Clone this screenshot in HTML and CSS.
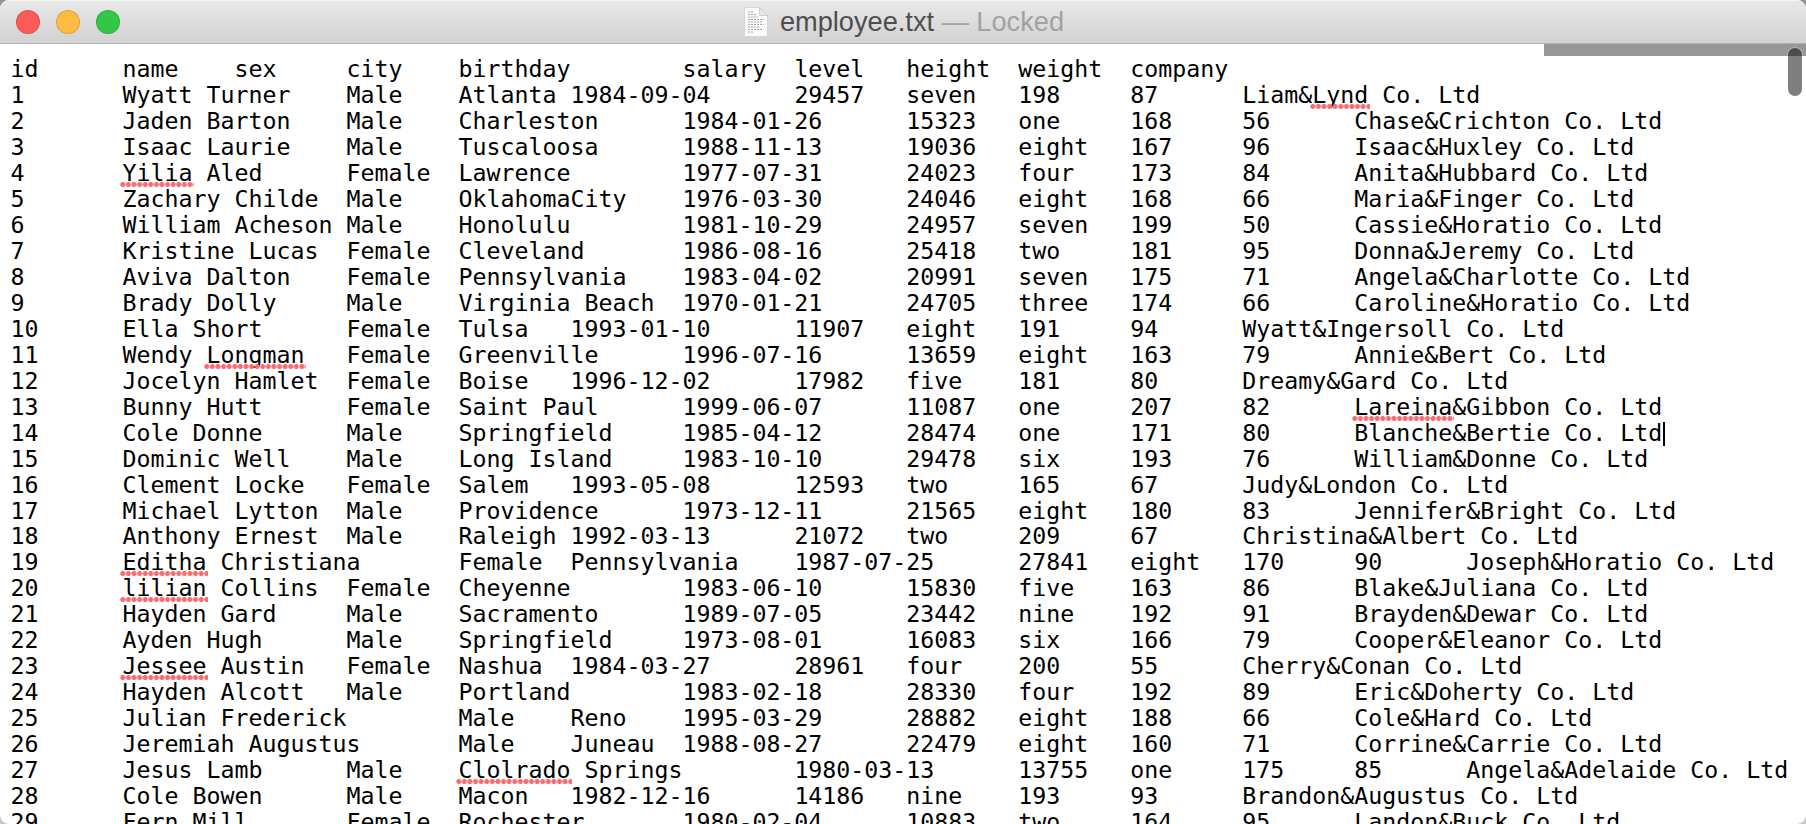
FILE: index.html
```html
<!DOCTYPE html>
<html lang="en">
<head>
<meta charset="utf-8">
<title>employee.txt</title>
<link rel="stylesheet" href="styles.css">
</head>
<body>
<div class="window">
<header class="titlebar">
<div class="lights"><span class="light red"></span><span class="light yellow"></span><span class="light green"></span></div>
<div class="title">
<svg class="docicon" width="24" height="30" viewBox="0 0 24 30"><path d="M0.5 0.5H15.5L23.5 8.5V29.5H0.5Z" fill="#fbfbfb" stroke="#d6d6d6" stroke-width="1"/><path d="M15.5 0.5V8.5H23.5Z" fill="#e6e6e6" stroke="#cfcfcf" stroke-width="1"/><path d="M4 5H9M4 7.5H13M4 10H14M4 12.5H20M4 15H19M4 17.5H20M4 20H16M4 22.5H19M4 25H9" stroke="#a8a8a8" stroke-width="1" stroke-dasharray="2 1"/></svg>
<span class="name">employee.txt</span><span class="locked"> — Locked</span>
</div>
</header>
<main class="content">
<pre class="text">id	name	sex	city	birthday	salary	level	height	weight	company
1	Wyatt Turner	Male	Atlanta	1984-09-04	29457	seven	198	87	Liam&amp;<span class="spell">Lynd</span> Co. Ltd
2	Jaden Barton	Male	Charleston	1984-01-26	15323	one	168	56	Chase&amp;Crichton Co. Ltd
3	Isaac Laurie	Male	Tuscaloosa	1988-11-13	19036	eight	167	96	Isaac&amp;Huxley Co. Ltd
4	<span class="spell">Yilia</span> Aled	Female	Lawrence	1977-07-31	24023	four	173	84	Anita&amp;Hubbard Co. Ltd
5	Zachary Childe	Male	OklahomaCity	1976-03-30	24046	eight	168	66	Maria&amp;Finger Co. Ltd
6	William Acheson	Male	Honolulu	1981-10-29	24957	seven	199	50	Cassie&amp;Horatio Co. Ltd
7	Kristine Lucas	Female	Cleveland	1986-08-16	25418	two	181	95	Donna&amp;Jeremy Co. Ltd
8	Aviva Dalton	Female	Pennsylvania	1983-04-02	20991	seven	175	71	Angela&amp;Charlotte Co. Ltd
9	Brady Dolly	Male	Virginia Beach	1970-01-21	24705	three	174	66	Caroline&amp;Horatio Co. Ltd
10	Ella Short	Female	Tulsa	1993-01-10	11907	eight	191	94	Wyatt&amp;Ingersoll Co. Ltd
11	Wendy <span class="spell">Longman</span>	Female	Greenville	1996-07-16	13659	eight	163	79	Annie&amp;Bert Co. Ltd
12	Jocelyn Hamlet	Female	Boise	1996-12-02	17982	five	181	80	Dreamy&amp;Gard Co. Ltd
13	Bunny Hutt	Female	Saint Paul	1999-06-07	11087	one	207	82	<span class="spell">Lareina</span>&amp;Gibbon Co. Ltd
14	Cole Donne	Male	Springfield	1985-04-12	28474	one	171	80	Blanche&amp;Bertie Co. Ltd<span class="caret"></span>
15	Dominic Well	Male	Long Island	1983-10-10	29478	six	193	76	William&amp;Donne Co. Ltd
16	Clement Locke	Female	Salem	1993-05-08	12593	two	165	67	Judy&amp;London Co. Ltd
17	Michael Lytton	Male	Providence	1973-12-11	21565	eight	180	83	Jennifer&amp;Bright Co. Ltd
18	Anthony Ernest	Male	Raleigh	1992-03-13	21072	two	209	67	Christina&amp;Albert Co. Ltd
19	<span class="spell">Editha</span> Christiana	Female	Pennsylvania	1987-07-25	27841	eight	170	90	Joseph&amp;Horatio Co. Ltd
20	<span class="spell">lilian</span> Collins	Female	Cheyenne	1983-06-10	15830	five	163	86	Blake&amp;Juliana Co. Ltd
21	Hayden Gard	Male	Sacramento	1989-07-05	23442	nine	192	91	Brayden&amp;Dewar Co. Ltd
22	Ayden Hugh	Male	Springfield	1973-08-01	16083	six	166	79	Cooper&amp;Eleanor Co. Ltd
23	<span class="spell">Jessee</span> Austin	Female	Nashua	1984-03-27	28961	four	200	55	Cherry&amp;Conan Co. Ltd
24	Hayden Alcott	Male	Portland	1983-02-18	28330	four	192	89	Eric&amp;Doherty Co. Ltd
25	Julian Frederick	Male	Reno	1995-03-29	28882	eight	188	66	Cole&amp;Hard Co. Ltd
26	Jeremiah Augustus	Male	Juneau	1988-08-27	22479	eight	160	71	Corrine&amp;Carrie Co. Ltd
27	Jesus Lamb	Male	<span class="spell">Clolrado</span> Springs	1980-03-13	13755	one	175	85	Angela&amp;Adelaide Co. Ltd
28	Cole Bowen	Male	Macon	1982-12-16	14186	nine	193	93	Brandon&amp;Augustus Co. Ltd
29	Fern Mill	Female	Rochester	1980-02-04	10883	two	164	95	Landon&amp;Buck Co. Ltd</pre>
<div class="hbar"></div>
<div class="vthumb"></div>
</main>
</div>
</body>
</html>
```
FILE: styles.css
```css
* { box-sizing: border-box; }
html, body { margin: 0; height: 100%; overflow: hidden; }
body { background: linear-gradient(#8d95a3, #c6c6c6 30%, #c6c6c6); }
.window {
  height: 824px;
  display: flex;
  flex-direction: column;
  border-radius: 9px;
  overflow: hidden;
  background: #fff;
}
.titlebar {
  height: 44px;
  flex: none;
  position: relative;
  display: flex;
  align-items: center;
  justify-content: center;
  background: linear-gradient(#e9e9e9, #d2d2d2);
  border-bottom: 1px solid #b1b1b1;
  box-shadow: inset 0 1px 0 #f4f4f4;
}
.lights {
  position: absolute;
  left: 16px;
  top: 10px;
  display: flex;
  gap: 16px;
}
.light {
  width: 24px;
  height: 24px;
  border-radius: 50%;
  border: 1px solid rgba(0,0,0,.12);
}
.red { background: #fc5b57; }
.yellow { background: #fdbc40; }
.green { background: #33c748; }
.title {
  display: flex;
  align-items: center;
  padding-left: 2px;
  font-family: "Liberation Sans", Arial, sans-serif;
  font-size: 27.2px;
  white-space: pre;
}
.docicon { margin-right: 12px; }
.name { color: #4e4e4e; }
.locked { color: #a2a2a2; }
.content {
  flex: 1;
  position: relative;
  overflow: hidden;
}
.text {
  margin: 0;
  padding: 12px 0 0 10.5px;
  font-family: "DejaVu Sans Mono", "Liberation Mono", monospace;
  font-size: 23.25px;
  line-height: 25.97px;
  tab-size: 8;
  color: #000;
}
.spell { position: relative; }
.spell::after {
  content: "";
  position: absolute;
  left: -2px;
  right: -2px;
  bottom: -1px;
  height: 5px;
  background-image: radial-gradient(circle at center, #fb6a6e 0, #fb6a6e 2.1px, rgba(251,106,110,0) 2.9px);
  background-size: 5.6px 5px;
  background-repeat: repeat-x;
}
.caret {
  display: inline-block;
  width: 2px;
  height: 24px;
  margin-left: 1px;
  background: #000;
  vertical-align: -5px;
}
.hbar {
  position: absolute;
  left: 1544px;
  right: 0;
  top: 0;
  height: 12px;
  background: #979899;
}
.vthumb {
  position: absolute;
  right: 4px;
  top: 4px;
  width: 14px;
  height: 48px;
  border-radius: 7px;
  background: rgba(0,0,0,.5);
  box-shadow: 0 0 0 1px rgba(255,255,255,.25);
}
```
